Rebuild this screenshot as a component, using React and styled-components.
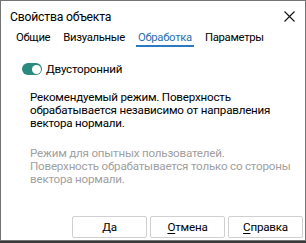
import React, { useState } from "react";
import styled, { createGlobalStyle } from "styled-components";

const GlobalStyle = createGlobalStyle`
    html, body {
        margin: 0;
        padding: 0;
        background: #3a3a3a;
    }
    body {
        font-family: Roboto, "Liberation Sans", sans-serif;
    }
`;

const Window = styled.div`
    box-sizing: border-box;
    width: 306px;
    height: 241px;
    background: #fff;
    border: 1px solid #747474;
    display: flex;
    flex-direction: column;
    color: #000;
    font-size: 11.6px;
    letter-spacing: -0.2px;
`;

const TitleBar = styled.div`
    height: 29px;
    display: flex;
    align-items: center;
    justify-content: space-between;
    padding: 1px 10px 0 9px;
`;

const Title = styled.span`
    font-size: 12.2px;
`;

const CloseButton = styled.button`
    border: none;
    background: none;
    padding: 0;
    width: 11px;
    height: 11px;
    display: flex;
    cursor: pointer;
`;

const Tabs = styled.div`
    display: flex;
    gap: 9px;
    padding: 0 0 0 13px;
`;

const Tab = styled.div`
    padding: 0 2px 1px;
    font-size: 11.3px;
    letter-spacing: -0.3px;
    line-height: 13px;
    color: ${(p) => (p.$active ? "#2b6fb0" : "#000")};
    border-bottom: 2px solid ${(p) => (p.$active ? "#2b79c2" : "transparent")};
    cursor: pointer;
`;

const Body = styled.div`
    flex: 1;
    padding: 15px 8px 0 21px;
    white-space: nowrap;
`;

const ToggleRow = styled.label`
    display: flex;
    align-items: center;
    gap: 4px;
    line-height: 14px;
    cursor: pointer;
`;

const Track = styled.span`
    width: 20px;
    height: 12px;
    border-radius: 6px;
    background: ${(p) => (p.$on ? "#2a8a80" : "#bbb")};
    position: relative;
`;

const Knob = styled.span`
    position: absolute;
    top: 1.5px;
    left: ${(p) => (p.$on ? "9.5px" : "1.5px")};
    width: 9px;
    height: 9px;
    border-radius: 50%;
    background: #fff;
`;

const Text = styled.p`
    margin: ${(p) => p.$top}px 0 0 8px;
    line-height: 13px;
    color: ${(p) => (p.$muted ? "#a0a0a0" : "#000")};
`;

const Footer = styled.div`
    display: flex;
    justify-content: flex-end;
    gap: 3px;
    padding: 0 2px 2px 0;
`;

const Button = styled.button`
    width: 75px;
    height: 22px;
    background: #fff;
    border: 1px solid #d0d0d0;
    border-radius: 2px;
    font-family: inherit;
    font-size: 11.6px;
    letter-spacing: -0.2px;
    color: #000;
    padding: 0;
    cursor: pointer;

    u {
        text-decoration-thickness: 1px;
        text-underline-offset: 2px;
    }
`;

const tabs = ["Общие", "Визуальные", "Обработка", "Параметры"];

const App = () => {
    const [active, setActive] = useState(2);
    const [twoSided, setTwoSided] = useState(true);

    return (
        <>
            <GlobalStyle />
            <Window>
                <TitleBar>
                    <Title>Свойства объекта</Title>
                    <CloseButton aria-label="close">
                        <svg width="11" height="11" viewBox="0 0 11 11">
                            <path d="M0.5 0.5L10.5 10.5M10.5 0.5L0.5 10.5" stroke="#111" strokeWidth="1.1" />
                        </svg>
                    </CloseButton>
                </TitleBar>
                <Tabs>
                    {tabs.map((t, i) => (
                        <Tab key={t} $active={i === active} onClick={() => setActive(i)}>
                            {t}
                        </Tab>
                    ))}
                </Tabs>
                <Body>
                    <ToggleRow onClick={() => setTwoSided(!twoSided)}>
                        <Track $on={twoSided}>
                            <Knob $on={twoSided} />
                        </Track>
                        Двусторонний
                    </ToggleRow>
                    <Text $top={14.5}>
                        Рекомендуемый режим. Поверхность
                        <br />
                        обрабатывается независимо от направления
                        <br />
                        вектора нормали.
                    </Text>
                    <Text $top={17} $muted>
                        Режим для опытных пользователей.
                        <br />
                        Поверхность обрабатывается только со стороны
                        <br />
                        вектора нормали.
                    </Text>
                </Body>
                <Footer>
                    <Button>Да</Button>
                    <Button>
                        <u>О</u>тмена
                    </Button>
                    <Button>
                        <u>С</u>правка
                    </Button>
                </Footer>
            </Window>
        </>
    );
};

export default App;
